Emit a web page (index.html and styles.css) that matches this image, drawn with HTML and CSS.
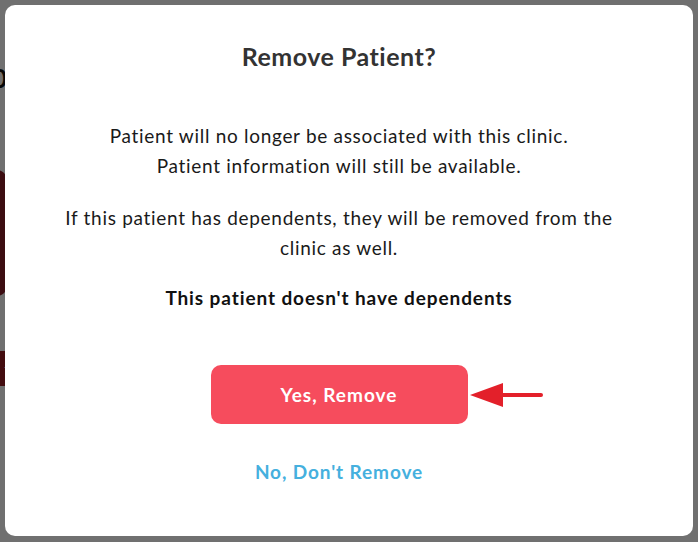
FILE: index.html
```html
<!DOCTYPE html>
<html lang="en">
<head>
  <meta charset="UTF-8">
  <title>Remove Patient</title>
  <link rel="stylesheet" href="styles.css">
</head>
<body>

<!-- Strona pod spodem (widoczna tylko przy lewej krawędzi) -->
<div class="page">
  <div class="page-num">0</div>
  <div class="page-card"></div>
  <div class="page-btn">t</div>
</div>

<!-- Okno potwierdzenia -->
<div class="overlay">
  <div class="modal">
    <h1>Remove Patient?</h1>
    <p class="msg">Patient will no longer be associated with this clinic.<br>Patient information will still be available.</p>
    <p class="msg second">If this patient has dependents, they will be removed from the<br>clinic as well.</p>
    <p class="msg strong">This patient doesn't have dependents</p>

    <div class="actions">
      <div class="btn-wrap">
        <button class="btn-remove">Yes, Remove</button>
        <!-- strzałka z adnotacji -->
        <svg class="arrow" width="74" height="30" viewBox="0 0 74 30">
          <polygon points="0,15 33,3 33,27" fill="#e3202a"/>
          <line x1="32" y1="15" x2="71" y2="15" stroke="#e3202a" stroke-width="4" stroke-linecap="round"/>
        </svg>
      </div>
    </div>

    <button class="btn-cancel">No, Don't Remove</button>
  </div>
</div>

</body>
</html>
```

FILE: styles.css
```css
body {
  margin: 0;
  font-family: Lato, "Open Sans", sans-serif;
  background: #fff;
  overflow: hidden;
}
.page {
  height: 542px;
  padding-top: 62px;
  box-sizing: border-box;
}
.page-num {
  margin-left: -8px;
  font-size: 26px;
  font-weight: bold;
  color: #111;
}
.page-card {
  width: 120px;
  height: 126px;
  margin-left: -113px;
  margin-top: 76px;
  border-radius: 10px;
  background: #8a1f28;
}
.page-btn {
  width: 60px;
  height: 35px;
  margin-left: -50px;
  margin-top: 55px;
  background: #9a1c24;
  color: #fff;
  font-size: 16px;
  line-height: 35px;
  text-align: right;
}
.overlay {
  position: fixed;
  inset: 0;
  background: rgba(0, 0, 0, 0.56);
  padding: 5px 5px 6px 5px;
  display: flex;
}
.modal {
  flex: 1;
  background: #fff;
  border-radius: 10px;
  text-align: center;
  padding: 35px 20px 0 0;
}
h1 {
  margin: 0 0 49px;
  font-size: 25px;
  font-weight: bold;
  letter-spacing: 0.5px;
  color: #333;
  line-height: 32px;
}
.msg {
  margin: 0 0 22px;
  font-size: 19px;
  letter-spacing: 0.7px;
  line-height: 30px;
  color: #1a1a1a;
}
.second {
  margin-bottom: 20px;
}
.strong {
  font-weight: bold;
  letter-spacing: 0.9px;
  color: #111;
}
.actions {
  margin-top: 52px;
  display: flex;
  justify-content: center;
}
.btn-wrap {
  position: relative;
}
.btn-remove {
  display: block;
  width: 257px;
  height: 59px;
  border: none;
  border-radius: 10px;
  background: #f64c5d;
  color: #fff;
  font-family: inherit;
  font-size: 19px;
  font-weight: bold;
  letter-spacing: 1px;
}
.arrow {
  position: absolute;
  left: calc(100% + 2px);
  top: 15px;
}
.btn-cancel {
  margin-top: 36px;
  border: none;
  background: none;
  color: #45b0de;
  font-family: inherit;
  font-size: 19px;
  font-weight: bold;
  letter-spacing: 0.9px;
  padding: 0;
}
```
